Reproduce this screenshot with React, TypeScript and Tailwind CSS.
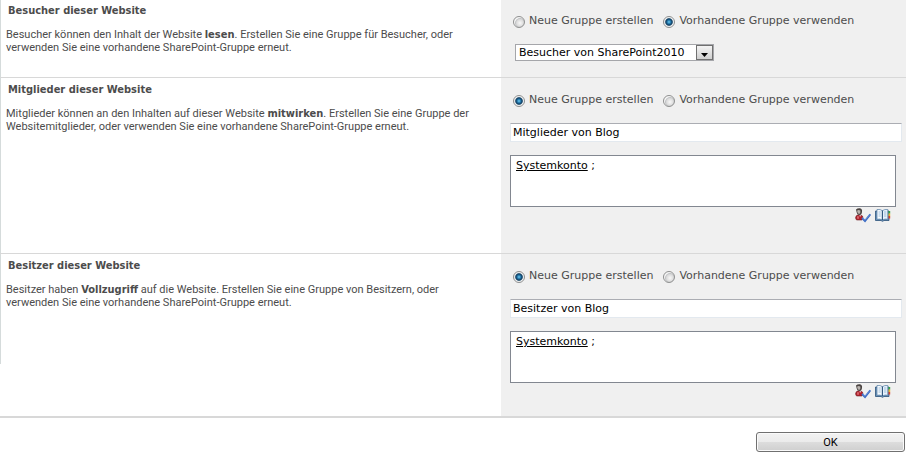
import React, { useState } from 'react';

type GroupMode = 'new' | 'existing';

interface GroupModeRadiosProps {
    name: string;
    mode: GroupMode;
    setMode: (val: GroupMode) => void;
}

const radioClass =
    'mt-0.5 mr-1 h-3 w-3 shrink-0 appearance-none rounded-full border border-[#8e8f8f] bg-[radial-gradient(circle_at_60%_60%,#f8f8f8_0%,#dcdcdc_40%,#c2c4c6_54%,#f6f6f6_62%)] checked:bg-[radial-gradient(circle_at_50%_50%,#7fd0f0_0%,#2f8fc4_18%,#12466e_40%,#24506f_48%,#e9ecee_60%,#f6f6f6_70%)]';

const GroupModeRadios: React.FC<GroupModeRadiosProps> = ({ name, mode, setMode }) => (
    <div className="flex h-3.5 gap-2.5 pl-[3px] whitespace-nowrap text-[#4c4c4c]">
        <label className="flex">
            <input
                type="radio"
                name={name}
                checked={mode === 'new'}
                onChange={() => setMode('new')}
                className={radioClass}
            />
            Neue Gruppe erstellen
        </label>
        <label className="flex">
            <input
                type="radio"
                name={name}
                checked={mode === 'existing'}
                onChange={() => setMode('existing')}
                className={radioClass}
            />
            Vorhandene Gruppe verwenden
        </label>
    </div>
);

const CheckNamesIcon = () => (
    <svg width="16" height="15" viewBox="0 0 16 15" aria-hidden="true">
        <path d="M0.500 10Q0.500 7 4 6.800Q7.600 7 8 9L7 12H1.500Z" fill="#b3202c" stroke="#70262b" strokeWidth="0.6" />
        <path d="M2 8.500L3.500 8L4 10.500L2.500 11Z" fill="#e0737a" />
        <path d="M1 1.500Q2.500 0 5 0.300Q7.500 0.700 7 4Q6.700 7 4.500 7Q2 7 1.700 4.500Z" fill="#4a4442" />
        <path d="M2 2.800Q3.500 1.500 5.300 2.600Q5.800 5.800 4 6Q2.500 5.800 2 2.800Z" fill="#b9b3af" />
        <path d="M4.500 7L6 7.300L5 9Z" fill="#f3f3f3" />
        <path d="M7 10L10 13L15.300 6.300" fill="none" stroke="#3d6cc4" strokeWidth="2" />
        <path d="M7.500 10L10 12.200L14.800 6.500" fill="none" stroke="#7ba2e6" strokeWidth="0.6" />
    </svg>
);

const BrowseIcon = () => (
    <svg width="16" height="15" viewBox="0 0 16 15" aria-hidden="true">
        <path d="M0.500 3H14V12.500H9L7.500 13.300L6 12.500H0.500Z" fill="#6f95bb" stroke="#2b5279" strokeWidth="0.8" />
        <path d="M2 1.500Q5.500 1 7.400 2.700V12Q5 10.500 2 11.300Z" fill="#f6fbff" stroke="#557da3" strokeWidth="0.7" />
        <path d="M12.800 1.500Q9.500 1 7.400 2.700V12Q10 10.500 12.800 11.300Z" fill="#e6f1fb" stroke="#557da3" strokeWidth="0.7" />
        <path d="M7.400 2.700V12" stroke="#2b5279" strokeWidth="1" />
        <path d="M3.500 4H5.800M3.500 6H5.800M3.500 8H5.800M9 4H11.300M9 6H11.300M9 8H11.300" stroke="#8eb2d3" strokeWidth="0.8" />
        <path d="M13.500 3H15.200V5.500H13.500Z" fill="#37a24a" />
        <path d="M13.500 5.500H15.200V8H13.500Z" fill="#e8b52d" />
        <path d="M13.500 8H15.200V10.500H13.500Z" fill="#d8432f" />
    </svg>
);

interface NewGroupFieldsProps {
    label: string;
    groupName: string;
}

const NewGroupFields: React.FC<NewGroupFieldsProps> = ({ label, groupName }) => {
    const [value, setValue] = useState(groupName);

    return (
        <>
            <input
                type="text"
                aria-label={`${label}: Gruppenname`}
                value={value}
                onChange={(e) => setValue(e.target.value)}
                className="block h-[19px] w-full border border-[#e3e9ef] border-t-[#abadb3] bg-white px-0.5 text-black outline-none"
            />
            <div className="mr-1.5">
                <div
                    role="textbox"
                    aria-label={`${label}: Benutzer`}
                    contentEditable
                    suppressContentEditableWarning
                    className="mt-[13px] h-[52px] border border-[#828790] bg-white px-[5px] py-[3px] text-black outline-none"
                >
                    <span className="underline">Systemkonto</span> ;
                </div>
                <div className="mt-px flex h-3.5 justify-end gap-1 pr-[5px]">
                    <button type="button" title="Namen überprüfen">
                        <CheckNamesIcon />
                    </button>
                    <button type="button" title="Durchsuchen">
                        <BrowseIcon />
                    </button>
                </div>
            </div>
        </>
    );
};

const Strong: React.FC<{ children: React.ReactNode }> = ({ children }) => (
    <b className="leading-none font-['DejaVu_Sans_Condensed','DejaVu_Sans',sans-serif]">{children}</b>
);

interface GroupSectionProps {
    title: string;
    description: React.ReactNode;
    className: string;
    infoClassName: string;
    fieldsClassName: string;
    children: React.ReactNode;
}

const GroupSection: React.FC<GroupSectionProps> = ({
    title,
    description,
    className,
    infoClassName,
    fieldsClassName,
    children
}) => (
    <section className={`grid grid-cols-[501fr_405fr] border-[#d8d8d8] ${className}`}>
        <div className={`border-l border-[#d5dbdb] pt-[5px] pr-5 pl-[5px] text-[#4c4c4c] ${infoClassName}`}>
            <h3 className="pl-0.5 font-bold font-['DejaVu_Sans_Condensed','DejaVu_Sans',sans-serif]">{title}</h3>
            <p className="mt-[11px] font-['Roboto',sans-serif]">{description}</p>
        </div>
        <div className={`bg-[#f0f0f0] pt-[15px] pr-1 pl-[9px] ${fieldsClassName}`}>{children}</div>
    </section>
);

export default function App() {
    const [visitorMode, setVisitorMode] = useState<GroupMode>('existing');
    const [memberMode, setMemberMode] = useState<GroupMode>('new');
    const [ownerMode, setOwnerMode] = useState<GroupMode>('new');

    return (
        <form
            onSubmit={(e) => e.preventDefault()}
            className="-mt-px bg-white pr-[3px] text-[11px] leading-[13px] font-['DejaVu_Sans',sans-serif]"
        >
            <GroupSection
                title="Besucher dieser Website"
                description={
                    <>
                        Besucher können den Inhalt der Website <Strong>lesen</Strong>. Erstellen Sie eine Gruppe für
                        Besucher, oder verwenden Sie eine vorhandene SharePoint-Gruppe erneut.
                    </>
                }
                className="border-b"
                infoClassName=""
                fieldsClassName="pb-4"
            >
                <GroupModeRadios name="visitors" mode={visitorMode} setMode={setVisitorMode} />
                <div className="relative mt-4 ml-[5px] w-[199px]">
                    <select
                        aria-label="Besuchergruppe"
                        className="block h-[17px] w-full appearance-none border border-[#a5a6aa] bg-white pl-[3px] text-black outline-none"
                    >
                        <option>Besucher von SharePoint2010</option>
                    </select>
                    <span className="pointer-events-none absolute inset-y-px right-px flex w-[17px] items-center justify-center border border-[#707070] bg-linear-to-b from-[#f4f4f4] to-[#cfcfcf] pt-1">
                        <svg width="7" height="4" viewBox="0 0 7 4" aria-hidden="true">
                            <path d="M0 0H7L3.500 4Z" fill="#000" />
                        </svg>
                    </span>
                </div>
            </GroupSection>

            <GroupSection
                title="Mitglieder dieser Website"
                description={
                    <>
                        Mitglieder können an den Inhalten auf dieser Website <Strong>mitwirken</Strong>. Erstellen Sie eine
                        Gruppe der Websitemitglieder, oder verwenden Sie eine vorhandene SharePoint-Gruppe erneut.
                    </>
                }
                className="border-b"
                infoClassName=""
                fieldsClassName="pb-[31px]"
            >
                <div className="mb-4">
                    <GroupModeRadios name="members" mode={memberMode} setMode={setMemberMode} />
                </div>
                <NewGroupFields label="Mitglieder" groupName="Mitglieder von Blog" />
            </GroupSection>

            <GroupSection
                title="Besitzer dieser Website"
                description={
                    <>
                        Besitzer haben <Strong>Vollzugriff</Strong> auf die Website. Erstellen Sie eine Gruppe von
                        Besitzern, oder verwenden Sie eine vorhandene SharePoint-Gruppe erneut.
                    </>
                }
                className="border-b-2"
                infoClassName="mb-[52px]"
                fieldsClassName="pb-[18px]"
            >
                <div className="mb-4">
                    <GroupModeRadios name="owners" mode={ownerMode} setMode={setOwnerMode} />
                </div>
                <NewGroupFields label="Besitzer" groupName="Besitzer von Blog" />
            </GroupSection>

            <div className="mt-3.5 flex justify-end pr-px">
                <button
                    type="submit"
                    className="h-5 w-[149px] rounded-[3px] border border-[#707070] bg-[linear-gradient(#f2f2f2_0%,#ebebeb_50%,#dddddd_50%,#cfcfcf_100%)] text-black shadow-[inset_0_0_0_1px_#fafafa] font-['Roboto',sans-serif]"
                >
                    OK
                </button>
            </div>
        </form>
    );
}
